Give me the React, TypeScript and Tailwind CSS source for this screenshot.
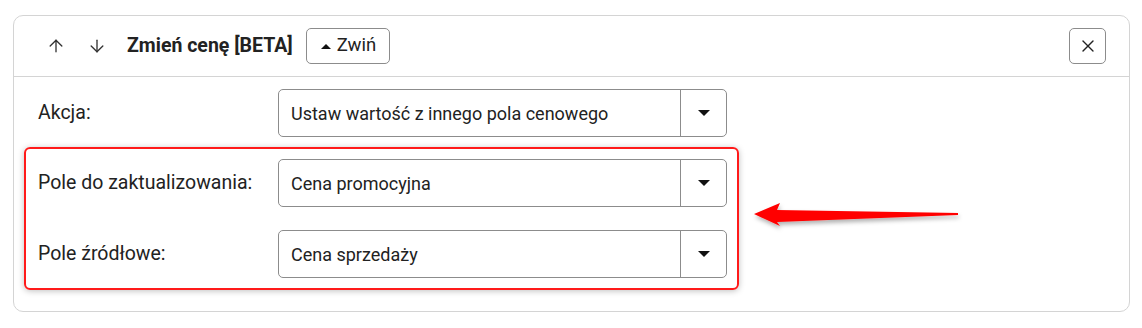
import { ArrowUp, ArrowDown, X } from "lucide-react";

const font = { fontFamily: "Roboto, 'Noto Sans', sans-serif" };

function Caret() {
	return (
		<svg width="12" height="6" viewBox="0 0 12 6" className="block">
			<path d="M0 0h12L6 6z" fill="#111" />
		</svg>
	);
}

function SelectBox({ value }: { value: string }) {
	return (
		<div className="flex h-[48px] w-[449px] items-stretch rounded-[5px] border border-[#8c8c8c] bg-white">
			<div className="flex flex-1 items-center pl-[12px] text-[18px] text-[#222]">{value}</div>
			<div className="flex w-[46px] items-center justify-center border-l border-[#8c8c8c]">
				<Caret />
			</div>
		</div>
	);
}

function Row({ label, value }: { label: string; value: string }) {
	return (
		<div className="flex items-center">
			<div className="w-[240px] text-[19.5px] text-[#222]">{label}</div>
			<SelectBox value={value} />
		</div>
	);
}

function RedArrow() {
	return (
		<svg width="220" height="40" viewBox="0 0 220 40" className="absolute left-[748px] top-[194px]" style={{ overflow: "visible" }}>
			<defs>
				<filter id="sh" x="-10%" y="-50%" width="120%" height="200%">
					<feDropShadow dx="1" dy="3" stdDeviation="2" floodColor="#000" floodOpacity="0.3" />
				</filter>
			</defs>
			<path
				d="M6 20 L32 9 L29 16 L210 19 L210 21 L29 28 L32 32 Z"
				fill="#ff0000"
				filter="url(#sh)"
			/>
		</svg>
	);
}

export default function App() {
	return (
		<div className="relative h-[328px] w-[1142px] bg-white pl-[13px] pt-[15px]" style={font}>
			<div className="w-[1117px] rounded-[10px] border border-[#d4d4d4] bg-white">
				<div className="flex h-[61px] items-center border-b border-[#d4d4d4] pl-[28px] pr-[23px]">
					<button className="flex h-[28px] w-[28px] items-center justify-center text-[#333]">
						<ArrowUp size={20} strokeWidth={1.6} />
					</button>
					<button className="ml-[13px] flex h-[28px] w-[28px] items-center justify-center text-[#333]">
						<ArrowDown size={20} strokeWidth={1.6} />
					</button>
					<h2 className="ml-[16px] text-[19.5px] font-bold text-[#222]">Zmień cenę [BETA]</h2>
					<button className="ml-[13px] flex h-[36px] items-center gap-[6px] rounded-[5px] border border-[#8c8c8c] pl-[14px] pr-[13px] text-[18.5px] text-[#222]">
						<svg width="10" height="5" viewBox="0 0 10 5" className="block">
							<path d="M0 5L5 0L10 5z" fill="#111" />
						</svg>
						Zwiń
					</button>
					<button className="ml-auto flex h-[36px] w-[37px] items-center justify-center rounded-[5px] border border-[#8c8c8c] text-[#222]">
						<X size={20} strokeWidth={1.6} />
					</button>
				</div>
				<div className="pb-[21px] pl-[10px] pt-[12px]">
					<div className="pl-[14px]">
						<Row label="Akcja:" value="Ustaw wartość z innego pola cenowego" />
					</div>
					<div className="mt-[10px] flex w-[715px] flex-col gap-[23px] rounded-[6px] border-2 border-[#ff1a1a] py-[10px] pl-[12px] shadow-[0_1px_6px_rgba(0,0,0,0.25)]">
						<Row label="Pole do zaktualizowania:" value="Cena promocyjna" />
						<Row label="Pole źródłowe:" value="Cena sprzedaży" />
					</div>
				</div>
			</div>
			<RedArrow />
		</div>
	);
}
